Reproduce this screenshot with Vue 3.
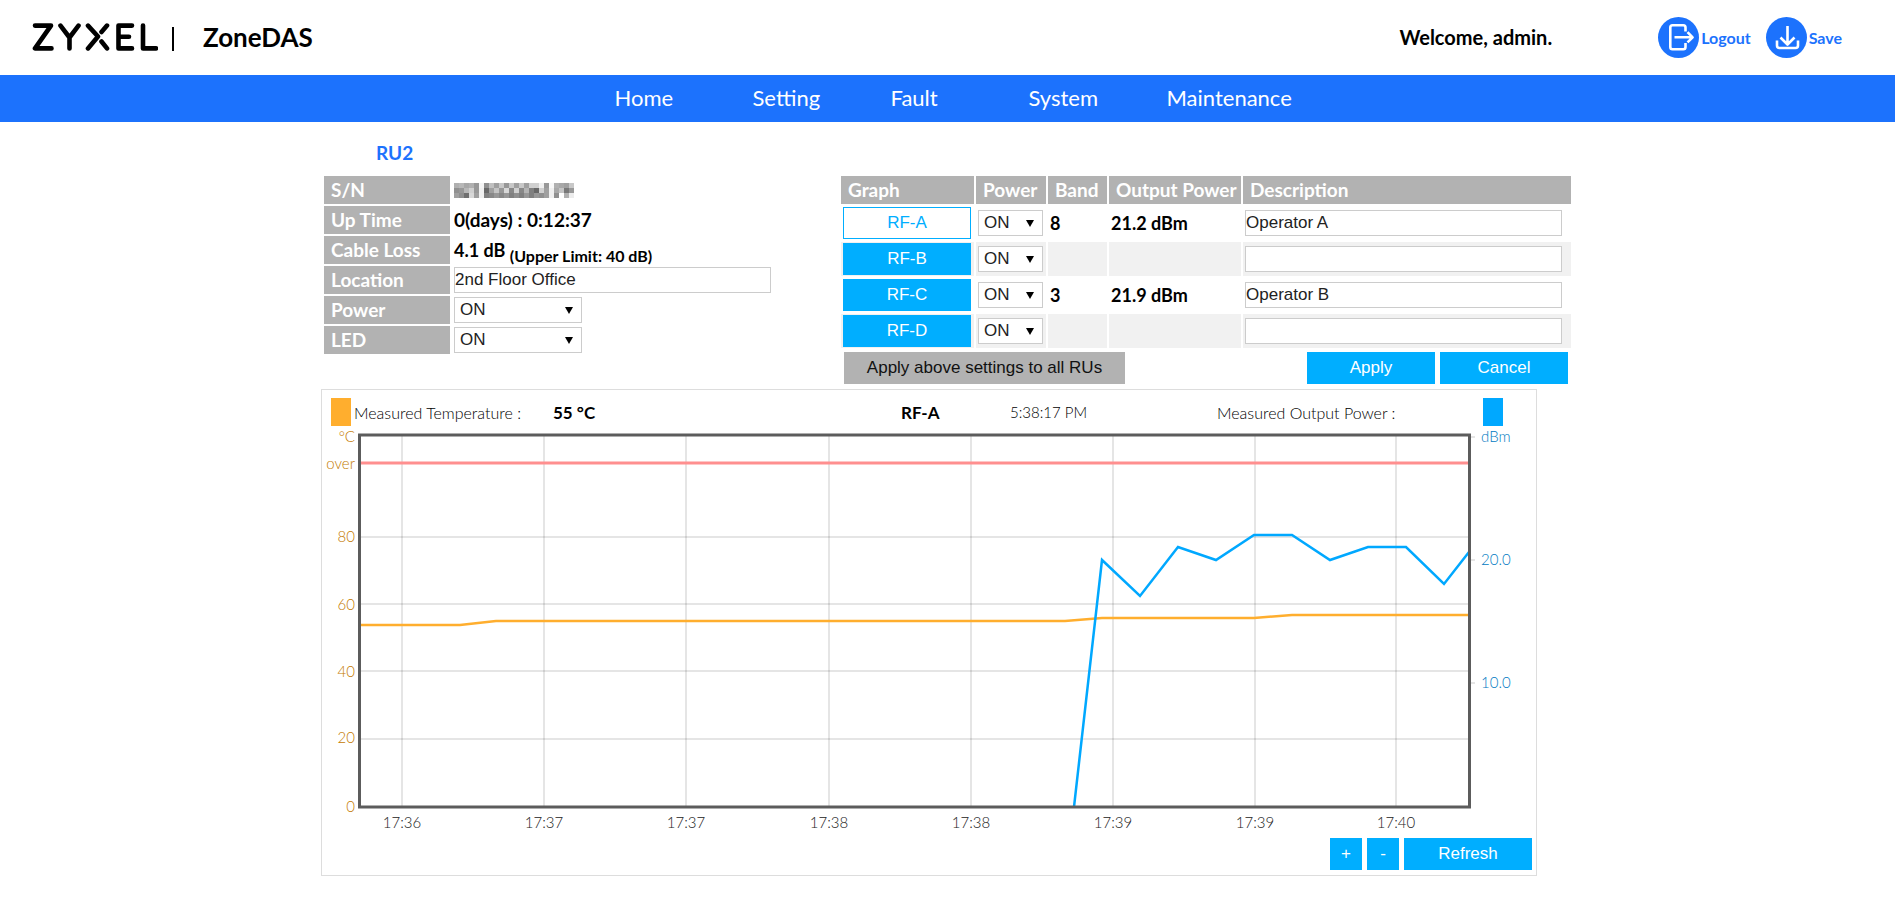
<script setup>
import { ref } from 'vue'

const navItems = ['Home', 'Setting', 'Fault', 'System', 'Maintenance']

const location = ref('2nd Floor Office')
const unitPower = ref('ON')
const led = ref('ON')

const channels = ref([
  { name: 'RF-A', power: 'ON', band: '8', output: '21.2 dBm', description: 'Operator A' },
  { name: 'RF-B', power: 'ON', band: '', output: '', description: '' },
  { name: 'RF-C', power: 'ON', band: '3', output: '21.9 dBm', description: 'Operator B' },
  { name: 'RF-D', power: 'ON', band: '', output: '', description: '' },
])
const selected = ref('RF-A')

// Grey levels of the masked serial number, three rows of blocks.
const mask = [
  'b0 b8 a8 b0 98 f4 90 c0 a0 c8 98 c8 a0 c8 a0 d0 d0 f0 98 f8 b0 a8 a0 c8',
  '90 98 b8 d0 98 f0 68 a0 c4 98 d8 88 d0 88 b4 80 68 d0 a0 f0 a8 c4 78 98',
  'a0 90 70 d8 a0 f0 80 88 98 88 98 80 90 80 98 80 98 90 a0 f0 90 ff b0 ec',
].map((row) => row.split(' '))

const gridX = [
  { x: 80, label: '17:36' },
  { x: 222, label: '17:37' },
  { x: 364, label: '17:37' },
  { x: 507, label: '17:38' },
  { x: 649, label: '17:38' },
  { x: 791, label: '17:39' },
  { x: 933, label: '17:39' },
  { x: 1074, label: '17:40' },
]
const gridY = [109, 176, 243, 311]
const leftLabels = [
  { y: 14, label: '°C' },
  { y: 41, label: 'over' },
  { y: 114, label: '80' },
  { y: 182, label: '60' },
  { y: 249, label: '40' },
  { y: 315, label: '20' },
  { y: 384, label: '0' },
]
const rightLabels = [
  { y: 9, label: 'dBm' },
  { y: 132, label: '20.0' },
  { y: 255, label: '10.0' },
]
const temperature = '38,197 138,197 174,193 743,193 780,190 932,190 970,187 1147,187'
const outputPower =
  '752,379 780,132 818,168 856,119 894,132 932,107 970,107 1008,132 1046,119 1084,119 1122,156 1147,124'
</script>

<template>
  <header class="top">
    <svg class="logo" viewBox="0 0 126 28" role="img" aria-label="ZYXEL">
      <g fill="none" stroke="#000" stroke-width="4.6" stroke-linecap="round" stroke-linejoin="round">
        <path d="M3 2.6H19L3 25.4H19.5" />
        <path d="M28.500 2.600L37.500 14.500L46.500 2.600M37.500 14.500V25.400" />
        <path d="M56 2.600L66 13.500L56 25.400" />
        <path d="M75 2.600L69.500 9M69.500 18.500L75 25.400" />
        <path d="M100 2.600H86.500V25.400H100M86.500 13.800H97" />
        <path d="M111 2.600V25.400H124" />
      </g>
    </svg>
    <span class="divider"></span>
    <span class="product">ZoneDAS</span>
    <span class="welcome">Welcome, admin.</span>
    <a class="action logout" href="#">
      <svg viewBox="0 0 41 41" aria-hidden="true">
        <circle cx="20.500" cy="20.500" r="20.500" fill="#1c72fd" />
        <g fill="none" stroke="#fff" stroke-width="2.600" stroke-linejoin="round">
          <path d="M27.500 14.500V10.500Q27.500 8.300 25.300 8.300H14.500Q12.300 8.300 12.300 10.500V30Q12.300 32.200 14.500 32.200H25.300Q27.500 32.200 27.500 30V26" />
          <path d="M16.500 20.300H34M29.500 15.200L34.600 20.300L29.500 25.400" />
        </g>
      </svg>
      <span>Logout</span>
    </a>
    <a class="action" href="#">
      <svg viewBox="0 0 41 41" aria-hidden="true">
        <circle cx="20.500" cy="20.500" r="20.500" fill="#1c72fd" />
        <g fill="none" stroke="#fff" stroke-width="2.600" stroke-linejoin="round">
          <path d="M21.500 9V27.500M14.500 20.500L21.500 27.500L28.500 20.500" />
          <path d="M11 23.500V28.500Q11 31 13.500 31H29.500Q32 31 32 28.500V23.500" />
        </g>
      </svg>
      <span>Save</span>
    </a>
  </header>

  <nav class="nav">
    <a v-for="item in navItems" :key="item" href="#">{{ item }}</a>
  </nav>

  <main class="page">
    <h1>RU2</h1>

    <div class="panels">
      <table class="info">
        <tbody>
          <tr>
            <th scope="row">S/N</th>
            <td>
              <svg class="mask" viewBox="0 0 120 15" role="img" aria-label="Hidden serial number" shape-rendering="crispEdges">
                <template v-for="(row, r) in mask" :key="r">
                  <rect v-for="(g, c) in row" :key="c" :x="c * 5" :y="r * 5" width="5" height="5" :fill="'#' + g + g + g" />
                </template>
              </svg>
            </td>
          </tr>
          <tr>
            <th scope="row">Up Time</th>
            <td>0(days) : 0:12:37</td>
          </tr>
          <tr>
            <th scope="row">Cable Loss</th>
            <td class="loss">4.1 dB <small>(Upper Limit: 40 dB)</small></td>
          </tr>
          <tr>
            <th scope="row"><label for="location">Location</label></th>
            <td><input id="location" v-model="location" type="text" /></td>
          </tr>
          <tr>
            <th scope="row"><label for="unit-power">Power</label></th>
            <td>
              <span class="select wide">
                <select id="unit-power" v-model="unitPower"><option>ON</option><option>OFF</option></select>
              </span>
            </td>
          </tr>
          <tr>
            <th scope="row"><label for="led">LED</label></th>
            <td>
              <span class="select wide">
                <select id="led" v-model="led"><option>ON</option><option>OFF</option></select>
              </span>
            </td>
          </tr>
        </tbody>
      </table>

      <section class="radio">
        <table class="channels">
          <colgroup>
            <col class="c-graph" /><col class="c-power" /><col class="c-band" /><col class="c-output" /><col />
          </colgroup>
          <thead>
            <tr>
              <th scope="col">Graph</th>
              <th scope="col">Power</th>
              <th scope="col">Band</th>
              <th scope="col">Output Power</th>
              <th scope="col">Description</th>
            </tr>
          </thead>
          <tbody>
            <tr v-for="ch in channels" :key="ch.name">
              <td>
                <button type="button" class="btn" :class="{ active: selected === ch.name }" @click="selected = ch.name">
                  {{ ch.name }}
                </button>
              </td>
              <td>
                <span class="select">
                  <select v-model="ch.power" :aria-label="ch.name + ' power'"><option>ON</option><option>OFF</option></select>
                </span>
              </td>
              <td>{{ ch.band }}</td>
              <td>{{ ch.output }}</td>
              <td><input v-model="ch.description" type="text" :aria-label="ch.name + ' description'" /></td>
            </tr>
          </tbody>
        </table>
        <div class="commands">
          <button type="button" class="btn all">Apply above settings to all RUs</button>
          <button type="button" class="btn">Apply</button>
          <button type="button" class="btn">Cancel</button>
        </div>
      </section>
    </div>

    <section class="chart">
      <div class="legend">
        <span class="swatch orange"></span>
        <span>Measured Temperature :</span>
        <strong>55 °C</strong>
        <strong>{{ selected }}</strong>
        <span class="time">5:38:17 PM</span>
        <span>Measured Output Power :</span>
        <span class="swatch blue"></span>
      </div>
      <svg class="plot" viewBox="0 0 1214 410" role="img" aria-label="Temperature and output power over time">
        <g stroke="#000" stroke-opacity="0.1" stroke-width="2">
          <line v-for="g in gridX" :key="g.x" :x1="g.x" y1="8" :x2="g.x" y2="379" />
          <line v-for="y in gridY" :key="y" x1="38" :y1="y" x2="1147" :y2="y" />
          <line v-for="t in rightLabels" :key="t.y" x1="1149" :y1="t.y" x2="1153" :y2="t.y" />
        </g>
        <g fill="none" stroke-width="2.500">
          <line x1="38" y1="35" x2="1147" y2="35" stroke="#ff8f8f" stroke-width="3" />
          <polyline :points="temperature" stroke="#ffae2e" />
          <polyline :points="outputPower" stroke="#00a8ff" />
        </g>
        <rect x="37.500" y="7" width="1110" height="372" fill="none" stroke="#5c5c5c" stroke-width="3" />
        <g class="left-axis">
          <text v-for="l in leftLabels" :key="l.y" x="33" :y="l.y">{{ l.label }}</text>
        </g>
        <g class="right-axis">
          <text v-for="l in rightLabels" :key="l.y" x="1159" :y="l.y + 5">{{ l.label }}</text>
        </g>
        <g class="x-axis">
          <text v-for="g in gridX" :key="g.x" :x="g.x" y="400">{{ g.label }}</text>
        </g>
      </svg>
      <div class="tools">
        <button type="button" class="btn square" aria-label="Zoom in">+</button>
        <button type="button" class="btn square" aria-label="Zoom out">-</button>
        <button type="button" class="btn">Refresh</button>
      </div>
    </section>
  </main>
</template>

<style>
body {
  background: #fff;
  color: #000;
  font-family: Lato, 'Open Sans', sans-serif;
}
</style>

<style scoped>
a {
  text-decoration: none;
}
button,
input,
select {
  box-sizing: border-box;
  margin: 0;
  font-family: 'Liberation Sans', Arial, sans-serif;
  font-size: 17px;
}

.top {
  display: flex;
  box-sizing: border-box;
  align-items: center;
  height: 75px;
  padding: 0 53px 1px 32px;
}
.logo {
  width: 126px;
  height: 28px;
}
.divider {
  width: 2px;
  height: 24px;
  margin: 3px 29px 0 14px;
  background: #000;
}
.product {
  font-size: 26px;
  font-weight: 700;
  line-height: 32px;
}
.welcome {
  margin-left: auto;
  margin-right: 106px;
  font-size: 20px;
  font-weight: 700;
}
.action {
  display: flex;
  align-items: center;
  gap: 2px;
  color: #1c72fd;
  font-size: 16px;
  font-weight: 700;
}
.action svg {
  width: 41px;
  height: 41px;
}
.logout {
  margin-right: 15px;
}

.nav {
  display: flex;
  justify-content: center;
  height: 47px;
  background: #1c72fd;
}
.nav a {
  box-sizing: border-box;
  width: 138px;
  padding-left: 12px;
  color: #fff;
  font-size: 22px;
  line-height: 46px;
}

.page {
  max-width: 1253px;
  margin: 0 auto;
}
h1 {
  margin: 0 0 0 55px;
  padding-top: 14px;
  color: #1c72fd;
  font-size: 19px;
  line-height: 34px;
}
.panels {
  display: flex;
  justify-content: space-between;
  padding: 4px 1px 0;
}
table {
  border-collapse: separate;
  border-spacing: 2px;
  font-size: 18px;
  font-weight: 700;
}
th {
  height: 28px;
  padding: 0 0 0 7px;
  background: #b2b2b2;
  color: #fff;
  font-size: 19px;
  line-height: 28px;
  text-align: left;
  box-sizing: border-box;
}
td {
  padding: 0 2px;
}
.info {
  align-self: flex-start;
  font-size: 19px;
}
.info th {
  width: 126px;
}
.info td {
  line-height: 26px;
}
.info .loss {
  font-size: 18px;
}
.info small {
  font-size: 16px;
  vertical-align: sub;
  line-height: 10px;
}
.mask {
  display: block;
  width: 120px;
  height: 15px;
}
input {
  display: block;
  width: 317px;
  height: 26px;
  padding: 0;
  border: 1px solid #ccc;
  border-radius: 0;
  background: #fff;
  color: #222;
}
.select {
  position: relative;
  display: block;
  width: 65px;
}
.select.wide {
  width: 128px;
}
.select::after {
  content: '';
  position: absolute;
  top: 10px;
  right: 9px;
  border: solid transparent;
  border-width: 7px 4px 0;
  border-top-color: #000;
  pointer-events: none;
}
select {
  appearance: none;
  display: block;
  width: 100%;
  height: 26px;
  padding: 0 0 2px 5px;
  border: 1px solid #ccc;
  border-radius: 0;
  background: #fff;
  color: #222;
}

.radio {
  width: 734px;
}
.channels {
  width: 100%;
  table-layout: fixed;
}
.channels td {
  height: 34px;
}
.channels tbody tr:nth-child(even) td {
  background: #f1f1f1;
}
.c-graph {
  width: 133px;
}
.c-power {
  width: 70px;
}
.c-band {
  width: 59px;
}
.c-output {
  width: 132px;
}
.btn {
  display: block;
  width: 128px;
  height: 32px;
  padding: 0;
  border: 1px solid #00aeff;
  border-radius: 0;
  background: #00aeff;
  color: #fff;
  line-height: 28px;
}
.btn.active {
  background: #fff;
  color: #00aeff;
}
.btn.all {
  width: 281px;
  margin-right: auto;
  border-color: #b2b2b2;
  background: #b2b2b2;
  color: #111;
}
.btn.square {
  width: 32px;
}
.commands {
  display: flex;
  gap: 5px;
  padding: 2px 5px 5px;
}

.chart {
  margin-right: 37px;
  border: 1px solid #ddd;
}
.legend {
  display: grid;
  grid-template-columns: 23px 199fr 348fr 109fr 207fr 266fr 20px;
  align-items: center;
  padding: 8px 33px 2px 9px;
  color: #000;
  font-size: 16px;
  font-weight: 300;
}
.legend strong {
  font-size: 17px;
  font-weight: 700;
}
.legend .time {
  font-size: 15px;
}
.swatch {
  width: 20px;
  height: 28px;
}
.orange {
  background: #ffae2e;
}
.blue {
  background: #00a8ff;
}
.plot {
  display: block;
  width: 100%;
  overflow: visible;
}
.plot text {
  font-size: 15px;
  font-weight: 300;
}
.left-axis {
  fill: #c47a00;
  text-anchor: end;
}
.right-axis {
  fill: #007ac2;
}
.x-axis {
  fill: #222;
  text-anchor: middle;
}
.tools {
  display: flex;
  justify-content: flex-end;
  gap: 5px;
  padding: 0 4px 5px;
}
</style>
